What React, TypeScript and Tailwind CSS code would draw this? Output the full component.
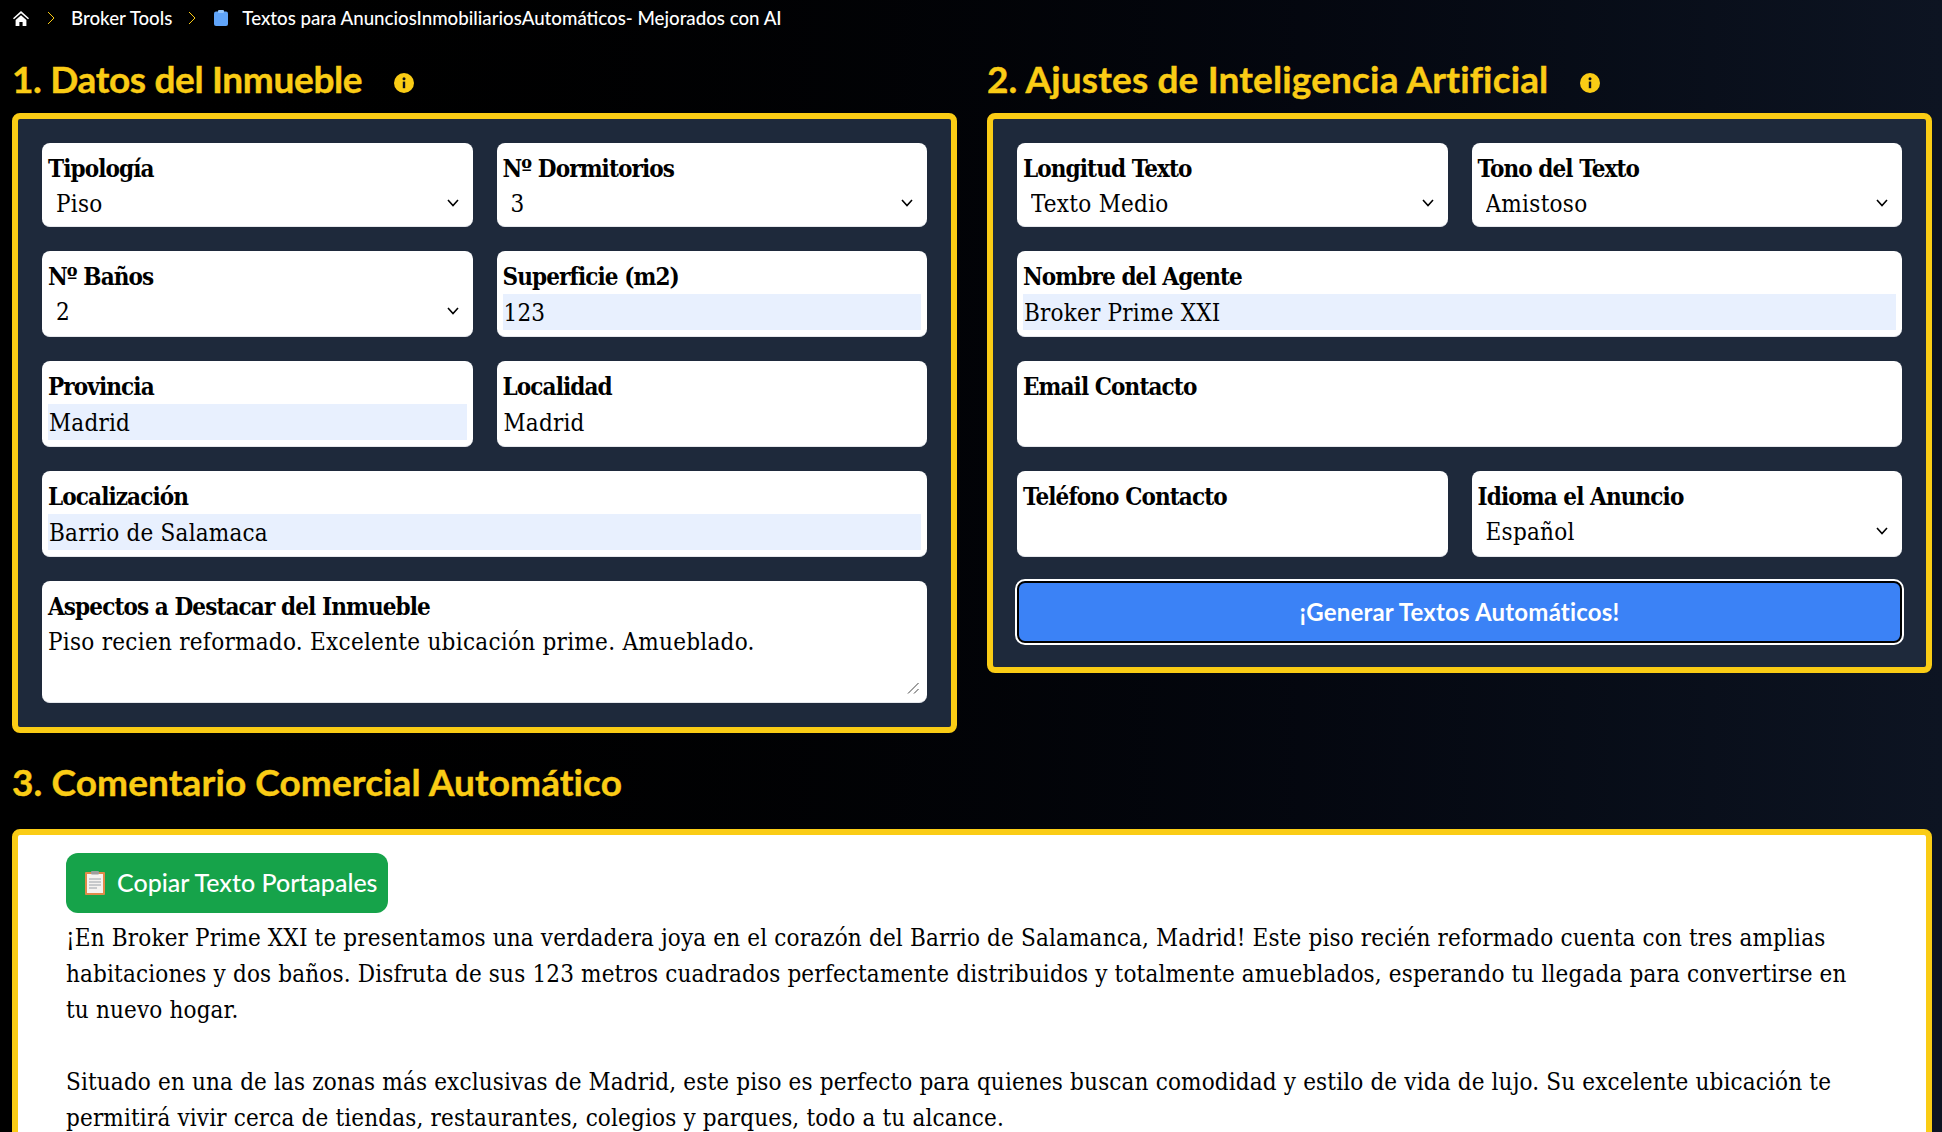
const card = "bg-white rounded-lg px-1.5 pt-1.5 pb-1.5 border-b border-gray-200";
const label = "block h-[37px] leading-[40px] font-bold text-[24px] tracking-[-0.9px] text-black";
const field = "block w-full h-9 pt-0.5 pl-px text-[24px] tracking-[0.2px] text-black outline-none";
const heading = "font-['Lato',sans-serif] font-bold text-[37px] leading-11 text-[#facc15] [-webkit-text-stroke:0.4px_#facc15]";

function Select({ name, value }: { name: string; value: string }) {
  return (
    <div className={card}>
      <label className={label}>{name}</label>
      <div className="relative">
        <select
          defaultValue={value}
          className="block w-full h-[34px] pl-2 appearance-none text-[24px] tracking-[0.27px] text-black outline-none"
        >
          <option>{value}</option>
        </select>
        <svg
          viewBox="0 0 12 8"
          className="absolute right-2 top-[13px] w-3 h-2 pointer-events-none"
          fill="none"
          stroke="black"
          strokeWidth="1.6"
        >
          <path d="M1 1l5 5.5L11 1" />
        </svg>
      </div>
    </div>
  );
}

function Input({ name, value, filled }: { name: string; value?: string; filled?: boolean }) {
  return (
    <div className={card}>
      <label className={label}>{name}</label>
      <input defaultValue={value} className={filled ? field + " bg-[#e8f0fe]" : field} />
    </div>
  );
}

function Info() {
  return (
    <svg viewBox="0 0 20 20" className="w-5 h-5 shrink-0">
      <circle cx="10" cy="10" r="10" fill="#facc15" />
      <rect x="8.8" y="8.6" width="2.4" height="6.6" fill="#0a0f1a" />
      <circle cx="10" cy="5.8" r="1.5" fill="#0a0f1a" />
    </svg>
  );
}

function Chevron() {
  return (
    <svg viewBox="0 0 8 14" className="w-2 h-3.5 shrink-0" fill="none" stroke="#facc15" strokeWidth="1">
      <path d="M1 1l6 6-6 6" />
    </svg>
  );
}

export default function App() {
  return (
    <div className="h-[1132px] overflow-hidden bg-gradient-to-r from-black to-[#0d1422] font-['DejaVu_Serif_Condensed','Liberation_Serif',serif]">
      <nav className="h-9 pl-[13px] flex items-center text-white font-['Lato',sans-serif] font-medium text-[18.7px]">
        <svg viewBox="0 0 16 15" className="w-4 h-[15px] shrink-0" fill="white">
          <path d="M8 0L0 7.2l1 1.1L8 2.2l7 6.1 1-1.1zM2.6 9v6h3.8v-4h3.2v4h3.8V9L8 4.2z" />
        </svg>
        <span className="ml-[18px]"><Chevron /></span>
        <span className="ml-4">Broker Tools</span>
        <span className="ml-4"><Chevron /></span>
        <svg viewBox="0 0 14 16" className="ml-[18px] w-3.5 h-4 shrink-0">
          <rect x="0" y="1.5" width="14" height="14.5" rx="2" fill="#60a5fa" />
          <rect x="4" y="0" width="6" height="3" rx="1" fill="#93c5fd" />
        </svg>
        <span className="ml-3.5">Textos para AnunciosInmobiliariosAutomáticos- Mejorados con AI</span>
      </nav>

      <main className="pl-3 pr-2.5">
        <div className="grid grid-cols-2 gap-[30px] items-start">
          <section>
            <div className={heading + " h-[77px] pt-[21px] flex items-start gap-8 tracking-[-0.35px]"}>
              <h2>1. Datos del Inmueble</h2>
              <span className="mt-4"><Info /></span>
            </div>
            <div className="border-[6px] border-[#facc15] rounded-lg bg-[#1e293b] p-6 flex flex-col gap-6">
              <div className="grid grid-cols-2 gap-6">
                <Select name="Tipología" value="Piso" />
                <Select name="Nº Dormitorios" value="3" />
                <Select name="Nº Baños" value="2" />
                <Input name="Superficie (m2)" value="123" filled />
                <Input name="Provincia" value="Madrid" filled />
                <Input name="Localidad" value="Madrid" />
              </div>
              <Input name="Localización" value="Barrio de Salamaca" filled />
              <div className="relative bg-white rounded-lg px-1.5 pt-1.5 pb-1 border-b border-gray-200">
                <label className={label}>Aspectos a Destacar del Inmueble</label>
                <textarea
                  defaultValue="Piso recien reformado. Excelente ubicación prime. Amueblado."
                  className="block w-full h-[74px] text-[24px] tracking-[0.27px] leading-9 text-black outline-none resize-none"
                />
                <svg
                  viewBox="0 0 12 12"
                  className="absolute right-2 bottom-2 w-3 h-3"
                  fill="none"
                  stroke="#444"
                  strokeWidth="1"
                >
                  <path d="M1 11.5L11.5 1M7 11.5L11.5 7" />
                </svg>
              </div>
            </div>
          </section>

          <section>
            <div className={heading + " h-[77px] pt-[21px] flex items-start gap-8 tracking-[0.15px]"}>
              <h2>2. Ajustes de Inteligencia Artificial</h2>
              <span className="mt-4"><Info /></span>
            </div>
            <div className="border-[6px] border-[#facc15] rounded-lg bg-[#1e293b] p-6 flex flex-col gap-6">
              <div className="grid grid-cols-2 gap-6">
                <Select name="Longitud Texto" value="Texto Medio" />
                <Select name="Tono del Texto" value="Amistoso" />
              </div>
              <Input name="Nombre del Agente" value="Broker Prime XXI" filled />
              <Input name="Email Contacto" />
              <div className="grid grid-cols-2 gap-6">
                <Input name="Teléfono Contacto" />
                <Select name="Idioma el Anuncio" value="Español" />
              </div>
              <button className="h-[62px] rounded-lg bg-[#3b82f6] border-2 border-black outline-2 outline-white text-white font-bold text-[24px] tracking-[0.2px] font-['Lato',sans-serif]">
                ¡Generar Textos Automáticos!
              </button>
            </div>
          </section>
        </div>

        <h2 className={heading + " mt-[21px] h-[75px] tracking-[0.1px] pt-1.5"}>
          3. Comentario Comercial Automático
        </h2>
        <section className="border-[6px] border-[#facc15] rounded-lg bg-white pt-[18px] pl-12 pr-[57px] pb-8">
          <button className="h-[60px] w-[322px] rounded-xl bg-[#16a34a] text-white text-[25px] font-['Lato',sans-serif] font-medium flex items-center pl-[19px] gap-3">
            <svg viewBox="0 0 20 24" className="w-5 h-6 shrink-0">
              <rect x="0" y="1" width="20" height="23" rx="1" fill="#e08a4a" />
              <rect x="2" y="3" width="16" height="19" fill="#f5f3f0" />
              <rect x="6" y="0" width="8" height="3.5" rx="1" fill="#9e9e9e" />
              <path d="M4 8h12M4 11h12M4 14h12M4 17h8" stroke="#9aa0a6" strokeWidth="1" />
            </svg>
            Copiar Texto Portapales
          </button>
          <p className="text-[24px] tracking-[0.15px] leading-9 text-black mt-[7px] whitespace-pre-line">
            {"¡En Broker Prime XXI te presentamos una verdadera joya en el corazón del Barrio de Salamanca, Madrid! Este piso recién reformado cuenta con tres amplias habitaciones y dos baños. Disfruta de sus 123 metros cuadrados perfectamente distribuidos y totalmente amueblados, esperando tu llegada para convertirse en tu nuevo hogar.\n\nSituado en una de las zonas más exclusivas de Madrid, este piso es perfecto para quienes buscan comodidad y estilo de vida de lujo. Su excelente ubicación te permitirá vivir cerca de tiendas, restaurantes, colegios y parques, todo a tu alcance."}
          </p>
        </section>
      </main>
    </div>
  );
}
